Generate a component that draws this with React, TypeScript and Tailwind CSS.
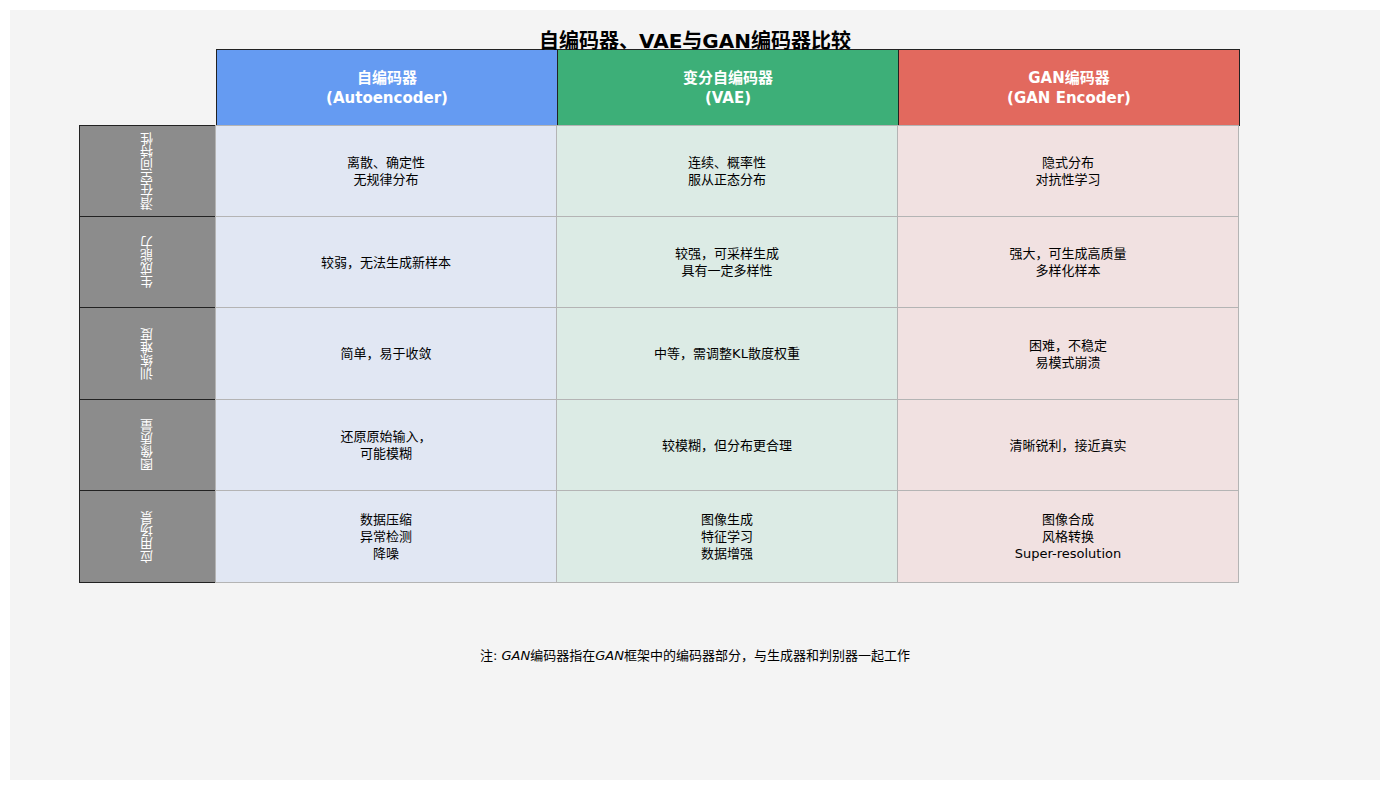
const F = { fontFamily: '"DejaVu Sans", "Noto Sans CJK SC", sans-serif' };

const cols = [
  { h: ["自编码器", "(Autoencoder)"], bg: "bg-[#659bf2]", light: "bg-[#e1e7f3]" },
  { h: ["变分自编码器", "(VAE)"], bg: "bg-[#3daf78]", light: "bg-[#dcebe5]" },
  { h: ["GAN编码器", "(GAN Encoder)"], bg: "bg-[#e2695e]", light: "bg-[#f1e1e1]" },
];

const rows: { label: string; h: string; cells: string[][] }[] = [
  { label: "潜在空间特性", h: "h-[92px]", cells: [["离散、确定性", "无规律分布"], ["连续、概率性", "服从正态分布"], ["隐式分布", "对抗性学习"]] },
  { label: "生成能力", h: "h-[92px]", cells: [["较弱，无法生成新样本"], ["较强，可采样生成", "具有一定多样性"], ["强大，可生成高质量", "多样化样本"]] },
  { label: "训练难度", h: "h-[93px]", cells: [["简单，易于收敛"], ["中等，需调整KL散度权重"], ["困难，不稳定", "易模式崩溃"]] },
  { label: "图像质量", h: "h-[92px]", cells: [["还原原始输入，", "可能模糊"], ["较模糊，但分布更合理"], ["清晰锐利，接近真实"]] },
  { label: "应用场景", h: "h-[93px]", cells: [["数据压缩", "异常检测", "降噪"], ["图像生成", "特征学习", "数据增强"], ["图像合成", "风格转换", "Super-resolution"]] },
];

export default function App() {
  return (
    <div className="w-[1389px] h-[790px] bg-white p-[10px]" style={F}>
      <div className="w-[1370px] h-[770px] bg-[#f4f4f4] pl-[69px] flex flex-col">
        <div className="relative z-10 mt-[19px] h-[24px] leading-[24px] text-[20px] font-bold text-black text-center w-[1232px] -ml-[69px] pl-[69px]" style={{ width: 1370, marginLeft: -69, paddingLeft: 0 }}>
          自编码器、VAE与GAN编码器比较
        </div>
        <div className="-mt-[4px] flex">
          <div className="w-[137px]" />
          {cols.map((c, i) => (
            <div key={i} className={`w-[342px] h-[77px] ${c.bg} border border-[#222] ${i > 0 ? "-ml-px" : ""} flex flex-col items-center justify-center text-white font-bold text-[15px] leading-[20px]`}>
              {c.h.map((t) => <div key={t}>{t}</div>)}
            </div>
          ))}
        </div>
        {rows.map((r, ri) => (
          <div key={ri} className={`flex ${r.h} -mt-px`}>
            <div className="w-[137px] h-full bg-[#8c8c8c] border border-[#222] flex items-center justify-center">
              <span className="text-white text-[13px] rotate-180" style={{ writingMode: "vertical-rl" }}>{r.label}</span>
            </div>
            {r.cells.map((lines, ci) => (
              <div key={ci} className={`w-[342px] h-full ${cols[ci].light} border border-[#b4b4b4] -ml-px flex flex-col items-center justify-center text-[13px] leading-[17px] text-black`}>
                {lines.map((t) => <div key={t}>{t}</div>)}
              </div>
            ))}
          </div>
        ))}
        <div className="mt-[63px] text-[13px] text-black text-center -ml-[69px]" style={{ width: 1370 }}>
          注: <i>GAN</i>编码器指在<i>GAN</i>框架中的编码器部分，与生成器和判别器一起工作
        </div>
      </div>
    </div>
  );
}
